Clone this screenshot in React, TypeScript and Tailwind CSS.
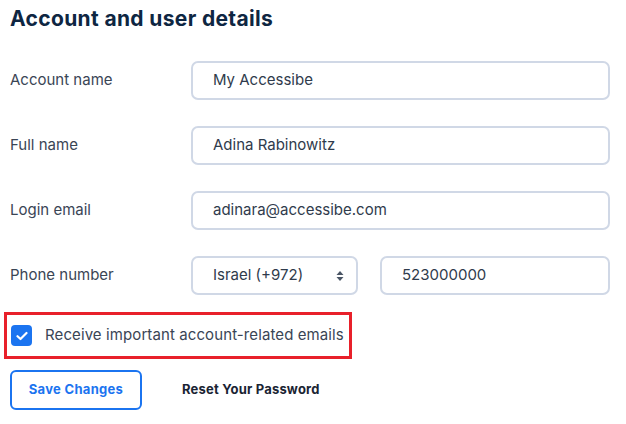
import React from "react";

const Label = ({ children }: { children: React.ReactNode }) => (
  <div className="w-[181px] shrink-0 text-[15px] text-[#3a4555]">{children}</div>
);

const Field = ({ value, className = "" }: { value: string; className?: string }) => (
  <div
    className={`h-[39px] flex items-center pl-[20px] border-2 border-[#d0d8e6] rounded-[7px] text-[15px] text-[#2f3b4c] ${className}`}
  >
    {value}
  </div>
);

export default function App() {
  return (
    <div className="w-[626px] h-[424px] bg-white overflow-hidden pl-[10px] pt-[5px]" style={{ fontFamily: "Inter, 'Noto Sans', sans-serif" }}>
      <h1 className="text-[21px] font-bold text-[#0e2642] leading-[28px] tracking-[0.35px]">
        Account and user details
      </h1>
      <div className="mt-[28px] flex flex-col gap-[26px] pr-[16px]">
        <div className="flex items-center">
          <Label>Account name</Label>
          <Field value="My Accessibe" className="flex-1" />
        </div>
        <div className="flex items-center">
          <Label>Full name</Label>
          <Field value="Adina Rabinowitz" className="flex-1" />
        </div>
        <div className="flex items-center">
          <Label>Login email</Label>
          <Field value="adinara@accessibe.com" className="flex-1" />
        </div>
        <div className="flex items-center">
          <Label>Phone number</Label>
          <div className="w-[167px] shrink-0 h-[39px] flex items-center justify-between pl-[20px] pr-[12px] border-2 border-[#d0d8e6] rounded-[7px] text-[15px] text-[#2f3b4c]">
            <span>Israel (+972)</span>
            <svg width="8" height="12" viewBox="0 0 8 12">
              <path d="M4 1 L7.5 5 H0.5 Z" fill="#4a5565" />
              <path d="M4 11 L7.5 7 H0.5 Z" fill="#4a5565" />
            </svg>
          </div>
          <Field value="523000000" className="flex-1 ml-[22px]" />
        </div>
      </div>
      <div className="mt-[17px] -ml-[6px] w-[348px] h-[47px] border-[3px] border-[#e8202a] flex items-center pl-[4px]">
        <div className="w-[21px] h-[21px] rounded-[4px] bg-[#1b74f0] flex items-center justify-center">
          <svg width="12" height="10" viewBox="0 0 12 10">
            <path d="M1.5 5.2 L4.5 8 L10.5 2" stroke="white" strokeWidth="2.2" fill="none" strokeLinecap="round" strokeLinejoin="round" />
          </svg>
        </div>
        <span className="ml-[13px] text-[15px] tracking-[0.1px] text-[#3a4555]">Receive important account-related emails</span>
      </div>
      <div className="mt-[11px] flex items-center">
        <button className="w-[132px] h-[40px] border-2 border-[#1b74f0] rounded-[6px] text-[13px] font-bold text-[#1b74f0] tracking-[0.3px]">
          Save Changes
        </button>
        <span className="ml-[40px] text-[13px] font-bold text-[#1a2433] tracking-[0.2px]">
          Reset Your Password
        </span>
      </div>
    </div>
  );
}
